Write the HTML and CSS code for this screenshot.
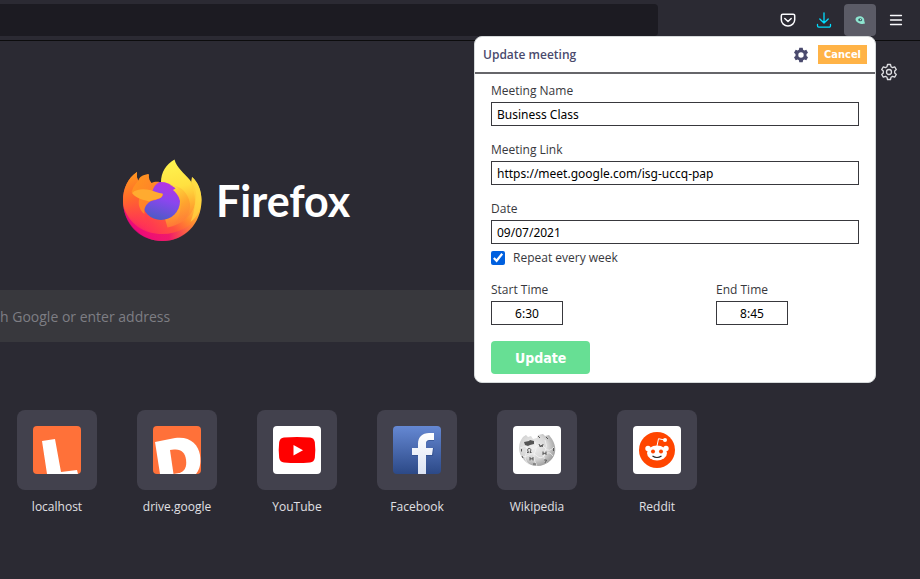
FILE: index.html
```html
<!DOCTYPE html>
<html lang="en">
<head>
<meta charset="utf-8">
<title>New Tab</title>
<link rel="stylesheet" href="styles.css">
</head>
<body>
<header class="toolbar">
  <div class="urlbar"></div>
  <nav class="tools">
    <button class="tool" aria-label="Save to Pocket"><svg width="16" height="16" viewBox="0 0 16 16" fill="none" stroke="#fbfbfe" stroke-width="1.5" stroke-linecap="round" stroke-linejoin="round"><path d="M2.8 2.2h10.4a1.5 1.5 0 0 1 1.5 1.5v4a6.7 6.2 0 0 1-13.4 0v-4a1.5 1.5 0 0 1 1.5-1.5z"/><path d="M4.8 6.5 8 9.5l3.200-3"/></svg></button>
    <button class="tool" aria-label="Downloads"><svg width="16" height="16" viewBox="0 0 16 16" fill="none" stroke="#00ddff" stroke-width="1.3" stroke-linecap="round" stroke-linejoin="round"><path d="M8 .8v10M3.8 7 8 11l4.200-4M1.500 12.500v1.300a1.300 1.300 0 0 0 1.300 1.300h10.400a1.300 1.300 0 0 0 1.300-1.300v-1.300"/></svg></button>
    <button class="tool active" aria-label="Meeting extension"><svg width="16" height="16" viewBox="0 0 16 16"><path d="M3.500 7C4 4.500 7 3.700 9.500 4.500c2 .7 3 2.500 2.800 4.500l.7 2.600-2.500.4C8 12 3.500 10.500 3.500 7z" fill="#8ee5d0"/><ellipse cx="8.200" cy="7.800" rx="2" ry="1.500" fill="#3f5f64"/><circle cx="8.600" cy="7.600" r=".6" fill="#b4fff0"/></svg></button>
    <button class="tool" aria-label="Menu"><svg width="16" height="16" viewBox="0 0 16 16" stroke="#fbfbfe" stroke-width="1.3" stroke-linecap="round"><path d="M2.500 3.500h11M2.500 8h11M2.500 12.500h11"/></svg></button>
  </nav>
</header>
<main class="newtab">
  <button class="customize" aria-label="Customize new tab"><svg width="18" height="18" viewBox="0 0 18 18" fill="none" stroke="#dedee2" stroke-width="1.3" stroke-linejoin="round"><path d="M7.500 1.500h3l.5 2.200 1.500.9 2.200-.8 1.600 2.700L14.700 8v2l1.600 1.500-1.600 2.700-2.200-.8-1.500.9-.5 2.200h-3L7 14.300l-1.500-.9-2.200.8-1.600-2.700L3.300 10V8L1.700 6.500l1.600-2.700 2.200.8L7 3.700z"/><circle cx="9" cy="9" r="2.500"/></svg></button>
  <div class="brand">
    <svg width="82" height="84" viewBox="0 0 82 84" role="img" aria-label="Firefox logo">
      <defs>
        <linearGradient id="fox" x1=".9" y1=".15" x2=".15" y2=".9"><stop offset="0" stop-color="#fff44f"/><stop offset=".2" stop-color="#ffc83a"/><stop offset=".42" stop-color="#ff8a2f"/><stop offset=".62" stop-color="#ff503f"/><stop offset=".85" stop-color="#ff3058"/><stop offset="1" stop-color="#f0107a"/></linearGradient>
        <linearGradient id="leftSide" x1=".3" y1="0" x2=".5" y2="1"><stop offset="0" stop-color="#ff9a1e"/><stop offset=".4" stop-color="#ff6a2a"/><stop offset="1" stop-color="#ff4048" stop-opacity="0"/></linearGradient>
        <linearGradient id="rim" x1="0" y1="0" x2="1" y2="0"><stop offset="0" stop-color="#e8007e"/><stop offset=".6" stop-color="#e8087a"/><stop offset="1" stop-color="#ff9640" stop-opacity="0"/></linearGradient>
        <linearGradient id="flame" x1=".45" y1="0" x2=".55" y2="1"><stop offset="0" stop-color="#fff44f"/><stop offset=".4" stop-color="#ffe040"/><stop offset=".7" stop-color="#ffab30"/><stop offset="1" stop-color="#ff7038"/></linearGradient>
        <linearGradient id="curl" x1=".3" y1="0" x2=".6" y2="1"><stop offset="0" stop-color="#ffd83c"/><stop offset=".5" stop-color="#ffa52e"/><stop offset="1" stop-color="#ff6a3a" stop-opacity="0"/></linearGradient>
        <linearGradient id="globe" x1=".65" y1="0" x2=".35" y2="1"><stop offset="0" stop-color="#b833e1"/><stop offset=".45" stop-color="#8a46ee"/><stop offset="1" stop-color="#4a5cc4"/></linearGradient>
        <linearGradient id="head" x1="0" y1="0" x2="1" y2="1"><stop offset="0" stop-color="#ff981e"/><stop offset="1" stop-color="#ff7430"/></linearGradient>
      </defs>
      <path d="M15 13c-.5 4 0 7 2 10 4-1 7 0 9 2l14 4 20-5 9 1c1-2 1-5 1-7 6 5 9.500 14 9.500 23C79.500 65 62 82 40.500 82S1 64 1 42C1 29 6 19 15 13z" fill="url(#fox)"/>
      <path d="M15 13c-.5 4 0 7 2 10l8 16-2 20 8 14C14 72 1 57 1 42 1 29 6 19 15 13z" fill="url(#leftSide)"/>
      <path d="M1.500 48c6 17 20 27 39 27 16 0 30-8 37-20-5 16-19 27-37 27C20 82 4 68 1.500 48z" fill="url(#rim)" opacity=".7"/>
      <path d="M39 23c0-9 5-18 13.500-22.500 2 8 10 14 15 20 6 7 8 14 6 23-3 14-14 22-28 25L39 46z" fill="url(#flame)"/>
      <path d="M70 18c6 5 9.500 14 9.500 23-.5 9-4 17-11 22 5-12 6-25 2-34-1-3-2-5-1.500-7z" fill="#ffd440" opacity=".7"/>
      <circle cx="39" cy="42" r="19" fill="url(#globe)"/>
      <path d="M51 31c2-1.500 4-1.500 6-.5-2-1.500-5-3.500-9-4 9-1 18 6 20 18 1 11-6 20-18 22 5-4 8-10 8.500-18 .5-7-2-13-7.500-17.500z" fill="url(#curl)"/>
      <path d="M27 15.500c-.5 3.500.5 6 2.500 8.500 2-1 5-1.500 8-1-4 2-6 5-7 9 3 3 6 3 10 3 .5 1 0 2-1 3-3 3-9 3-12 5-3 2-6 6-5 12-5-4-7-10-5-16l-8-6 2-5 5-7c1-3 4-5 9.500-6z" fill="url(#head)"/>
      <path d="M10 34c4-4 11-4.500 18-3 4 1 8 3 12.500 3.500.5 1 0 2-1 3.500-3 3-9 2-12.500 4.500-5-2-12-2-17-8.500z" fill="#ffab30"/>
    </svg>
    <span class="wordmark">Firefox</span>
  </div>
  <div class="search"><span>h Google or enter address</span></div>
  <ul class="sites">
    <li><a class="site" href="#"><span class="tile"><svg width="48" height="48" viewBox="0 0 48 48"><path fill="#ff7139" d="M0 0h48v48H0z"/><path fill="#fff" d="m9 15 13-2 6 33 16-2 1 4H14z"/></svg></span>localhost</a></li>
    <li><a class="site" href="#"><span class="tile"><svg width="48" height="48" viewBox="0 0 48 48"><path fill="#ff7139" d="M0 0h48v48H0z"/><path fill="#fff" d="m2 16 20-4c15-2 23 6 25 17 1 8 0 14-4 19H7z"/><path fill="#ff7139" d="m17 24 4-.5c7-.8 11 3 12 10s-1 12-7 13.500l-5.500 1z"/></svg></span>drive.google</a></li>
    <li><a class="site" href="#"><span class="tile"><svg width="48" height="48" viewBox="0 0 48 48"><path fill="#fff" d="M0 0h48v48H0z"/><path fill="red" d="M11 11.500q13-1 26 0 4 .4 4.800 4.500 1 8 0 16-.8 4.100-4.800 4.500-13 1-26 0-4-.4-4.800-4.500-1-8 0-16 .8-4.100 4.800-4.500z"/><path fill="#fff" d="m20.500 19 9.500 5.200-9.500 5.300z"/></svg></span>YouTube</a></li>
    <li><a class="site" href="#"><span class="tile"><svg width="48" height="48" viewBox="0 0 48 48"><defs><linearGradient id="fb" x2="0" y2="1"><stop stop-color="#6588d3"/><stop offset="1" stop-color="#2c4987"/></linearGradient><linearGradient id="fletter" x2="0" y2="1"><stop stop-color="#fff"/><stop offset="1" stop-color="#dbe3f3"/></linearGradient></defs><path fill="url(#fb)" d="M0 0h48v48H0z"/><path d="M25 49V30h-6v-8h6v-4c0-7 4-11 11-11h5v8h-4c-3 0-4 1-4 4v3h8l-1 8h-7v19z" fill="#274580" opacity=".5"/><path fill="url(#fletter)" d="M25 48V29h-6v-7h6v-4c0-7 4-11 11-11h5v7h-4c-3 0-4 1-4 4v4h7l-1 7h-6v19z"/></svg></span>Facebook</a></li>
    <li><a class="site" href="#"><span class="tile"><svg width="48" height="48" viewBox="0 0 48 48"><defs><radialGradient id="wiki" cx=".4" cy=".4" r=".65"><stop stop-color="#f0f0f0"/><stop offset=".6" stop-color="#d6d6d6"/><stop offset="1" stop-color="#9a9a9a"/></radialGradient></defs><path fill="#fff" d="M0 0h48v48H0z"/><path fill="url(#wiki)" d="m10 11 3-2 2 2 3-1 2 3 4-1 1-3 5-1 2 2 4-1 3 4c5 8 4 16-1 21-8 8-20 8-27 0s-6-17-1-23z"/><path fill="#555" d="m11 16 5-1 1-1 4 1v3l-4 1-2 1-3-1z"/><g fill="none" stroke="#f6f6f6" stroke-width=".7"><path d="M7 22q5-3 8 0t8-1 9 1 9-1M8 30q4 2 8-1t8 1 8-1 8 1M13 20q3 4 0 8t3 11M22 16q3 5 0 10t2 14M32 14q3 6 0 11t1 12"/></g><g fill="none" stroke="#555" stroke-width="1"><path d="M14 26.500h1.500q-2-4 .7-4t.8 4h1.500M26 18l1.300 3 .9-2 .9 2 1-3M30 25.500v3.500m3-3.500v3.500m-3-1.700h3M17 31v3.500m3-3.500v3.500m-3-1.700h3M31 34h2.500l-1.500 3M8.500 23v2.500M40.500 22v3M9 30l1 2M25 10l2 2M33 11l2 2M20 38h3"/></g></svg></span>Wikipedia</a></li>
    <li><a class="site" href="#"><span class="tile"><svg width="48" height="48" viewBox="0 0 48 48"><path fill="#fff" d="M0 0h48v48H0z"/><circle cx="24" cy="24" r="18" fill="#ff4500"/><g fill="#fff"><ellipse cx="24" cy="27" rx="10" ry="7.500"/><circle cx="15" cy="22.500" r="2.700"/><circle cx="33" cy="22.500" r="2.700"/><circle cx="32" cy="14" r="2"/></g><path d="m24 20 1.500-7.300 6 1.300" fill="none" stroke="#fff"/><g fill="#ff4500"><circle cx="20" cy="25.500" r="2"/><circle cx="28" cy="25.500" r="2"/></g><path d="M19.500 30q4.500 3 9 0" fill="none" stroke="#222" stroke-width="1.2"/></svg></span>Reddit</a></li>
  </ul>
</main>
<section class="popup" aria-label="Update meeting">
  <header class="popup-head">
    <h1>Update meeting</h1>
    <button class="settings" aria-label="Settings"><svg width="16" height="16" viewBox="0 0 16 16"><path fill="#4a4a6d" fill-rule="evenodd" d="M6.300.8h3.400l.4 2 1.200.7 2-.7L15 5.700l-1.500 1.400v1.800l1.500 1.400-1.700 2.900-2-.7-1.200.7-.4 2H6.300l-.4-2-1.200-.7-2 .7L1 10.300l1.500-1.400V7.100L1 5.700l1.700-2.900 2 .7 1.200-.7zM8 5.300a2.700 2.700 0 1 0 0 5.400 2.700 2.700 0 0 0 0-5.400z"/></svg></button>
    <button class="cancel">Cancel</button>
  </header>
  <form class="form">
    <div class="field"><label for="name">Meeting Name</label><input id="name" type="text" value="Business Class"></div>
    <div class="field"><label for="link">Meeting Link</label><input id="link" type="text" value="https://meet.google.com/isg-uccq-pap"></div>
    <div class="field"><label for="date">Date</label><input id="date" type="text" value="09/07/2021"></div>
    <div class="repeat"><input id="repeat" type="checkbox" checked><label for="repeat">Repeat every week</label></div>
    <div class="times">
      <div class="field"><label for="start">Start Time</label><input id="start" type="text" value="6:30"></div>
      <div class="field"><label for="end">End Time</label><input id="end" type="text" value="8:45"></div>
    </div>
    <button class="update" type="button">Update</button>
  </form>
</section>
</body>
</html>
```
FILE: styles.css
```css
* {
  box-sizing: border-box;
}

body {
  margin: 0;
  min-height: 100vh;
  background: #2b2a33;
  color: #fbfbfe;
  font-family: "Open Sans", sans-serif;
  overflow: hidden;
}

button {
  border: 0;
  padding: 0;
  background: none;
}

svg {
  display: block;
}

.toolbar {
  display: flex;
  justify-content: space-between;
  height: 41px;
  padding: 4px 8px 4px 0;
  border-bottom: 1px solid #0c0c0d;
}

.urlbar {
  flex: 1;
  max-width: 658px;
  background: #1c1b22;
  border-radius: 0 4px 4px 0;
}

.tools {
  display: flex;
  gap: 4px;
}

.tool {
  display: grid;
  place-items: center;
  width: 32px;
  height: 32px;
  border-radius: 4px;
}

.active {
  background: #5b5b66;
}

.newtab {
  position: relative;
}

.customize {
  position: absolute;
  top: 22px;
  right: 22px;
}

.brand {
  display: flex;
  align-items: center;
  gap: 12px;
  padding: 118px 0 0 122px;
}

.wordmark {
  font: 700 43px/48px Lato, sans-serif;
  color: #fff;
}

.search {
  display: flex;
  align-items: center;
  height: 52px;
  width: 697px;
  max-width: 100%;
  margin-top: 47px;
  background: #38383d;
  color: #7e7e84;
  font-size: 14px;
}

.sites {
  display: flex;
  gap: 24px;
  margin: 68px 0 0;
  padding: 0 0 0 9px;
  list-style: none;
}

.site {
  display: flex;
  flex-direction: column;
  align-items: center;
  gap: 8px;
  width: 96px;
  color: #e0e0e4;
  font-size: 12px;
  line-height: 18px;
  text-decoration: none;
}

.tile {
  display: grid;
  place-items: center;
  width: 80px;
  height: 80px;
  border-radius: 8px;
  background: #42414d;
}

.tile svg {
  border-radius: 4px;
}

.popup {
  position: absolute;
  top: 36px;
  right: 44px;
  width: 402px;
  background: #fff;
  border: 1px solid #d5d9da;
  border-radius: 8px;
  color: #38383d;
}

.popup-head {
  display: flex;
  align-items: center;
  height: 37px;
  padding: 0 8px;
  border-bottom: 2px solid #66666a;
}

.popup-head h1 {
  flex: 1;
  margin: 0;
  color: #4a4a6d;
  font: 600 12px/16px "Open Sans", sans-serif;
}

.cancel {
  height: 19px;
  margin-left: 9px;
  padding: 0 6px;
  background: #ffb347;
  color: #fff;
  font: 700 11px/16px "DejaVu Sans Condensed", "DejaVu Sans", sans-serif;
}

.form {
  padding: 8px 16px;
}

.field {
  display: flex;
  flex-direction: column;
  gap: 3px;
  margin-bottom: 15px;
}

label {
  font: 500 12px/17px "Open Sans", sans-serif;
}

.field input {
  width: 100%;
  height: 24px;
  padding: 0 5px;
  border: 1px solid #38383d;
  background: #fff;
  color: #000;
  font: 12px/16px "Noto Sans", sans-serif;
}

.repeat {
  display: flex;
  align-items: center;
  gap: 8px;
  margin: -10px 0 15px;
}

.repeat input {
  width: 14px;
  height: 14px;
  margin: 0;
  accent-color: #0060df;
}

.times {
  display: flex;
  justify-content: space-between;
  margin-bottom: 16px;
  padding-right: 71px;
}

.times .field {
  margin: 0;
}

.times .field input {
  width: 72px;
  text-align: center;
}

.update {
  height: 33px;
  padding: 0 24px;
  border-radius: 4px;
  background: #67df94;
  color: #fff;
  font: 700 14px/20px "DejaVu Sans Condensed", "DejaVu Sans", sans-serif;
}
```
